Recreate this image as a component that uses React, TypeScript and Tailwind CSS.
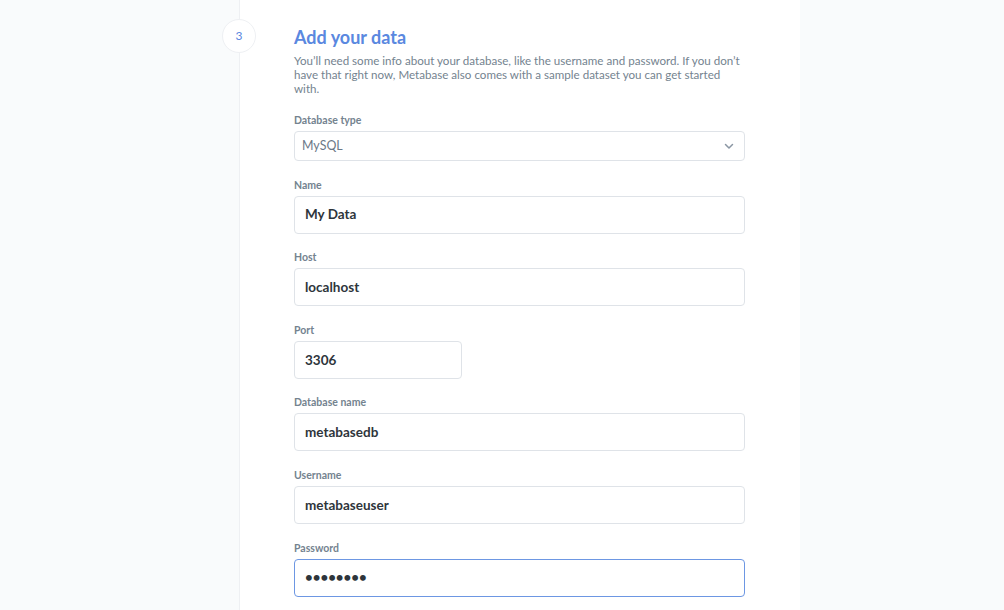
import React from 'react'

const fields = [
  { label: 'Name', value: 'My Data' },
  { label: 'Host', value: 'localhost' },
  { label: 'Port', value: '3306', narrow: true },
  { label: 'Database name', value: 'metabasedb' },
  { label: 'Username', value: 'metabaseuser' },
]

function Label({ children }: { children: React.ReactNode }) {
  return <div className="mb-[4px] text-[10.5px] font-bold leading-[14px] text-[#74838f]">{children}</div>
}

export default function App() {
  return (
    <div className="min-h-[610px] w-full bg-[#f9fbfc] font-['Lato',sans-serif]">
      <div className="relative ml-[239px] min-h-[610px] w-[561px] border-l border-[#eef0f3] bg-white px-[54px] pt-[25px]">
        {/* step badge */}
        <div className="absolute left-[-18px] top-[19px] flex h-[34px] w-[34px] items-center justify-center rounded-full border border-[#eef0f3] bg-white text-[12px] text-[#5a88e0]">
          3
        </div>

        <h2 className="text-[18px] font-bold leading-[24px] text-[#5a88e0]">Add your data</h2>
        <p className="mt-[5px] w-[451px] text-[11.6px] leading-[14px] text-[#74838f]">
          You’ll need some info about your database, like the username and password. If you don’t have that
          right now, Metabase also comes with a sample dataset you can get started with.
        </p>

        <div className="mt-[17px]">
          <Label>Database type</Label>
          <div className="flex h-[30px] w-[451px] items-center justify-between rounded-[4px] border border-[#dfe3e8] pl-[7px] pr-[10px] text-[12.4px] text-[#6b7887]">
            <span>MySQL</span>
            <svg width="10" height="10" viewBox="0 0 10 10" fill="none">
              <path d="M1.5 3.5 5 7l3.5-3.5" stroke="#8a96a3" strokeWidth="1.5" strokeLinecap="round" strokeLinejoin="round" />
            </svg>
          </div>
        </div>

        {fields.map((f) => (
          <div key={f.label} className="mt-[16.6px]">
            <Label>{f.label}</Label>
            <div
              className={`flex h-[38px] items-center rounded-[4px] border border-[#dfe3e8] px-[10px] text-[13.5px] font-bold text-[#2e353b] ${
                f.narrow ? 'w-[168px]' : 'w-[451px]'
              }`}
            >
              {f.value}
            </div>
          </div>
        ))}

        <div className="mt-[16.6px]">
          <Label>Password</Label>
          <div className="flex h-[38px] w-[451px] items-center rounded-[4px] border border-[#6d97e3] px-[10px] text-[13.3px] font-bold text-[#2e353b]">
            ••••••••
          </div>
        </div>
      </div>
    </div>
  )
}
